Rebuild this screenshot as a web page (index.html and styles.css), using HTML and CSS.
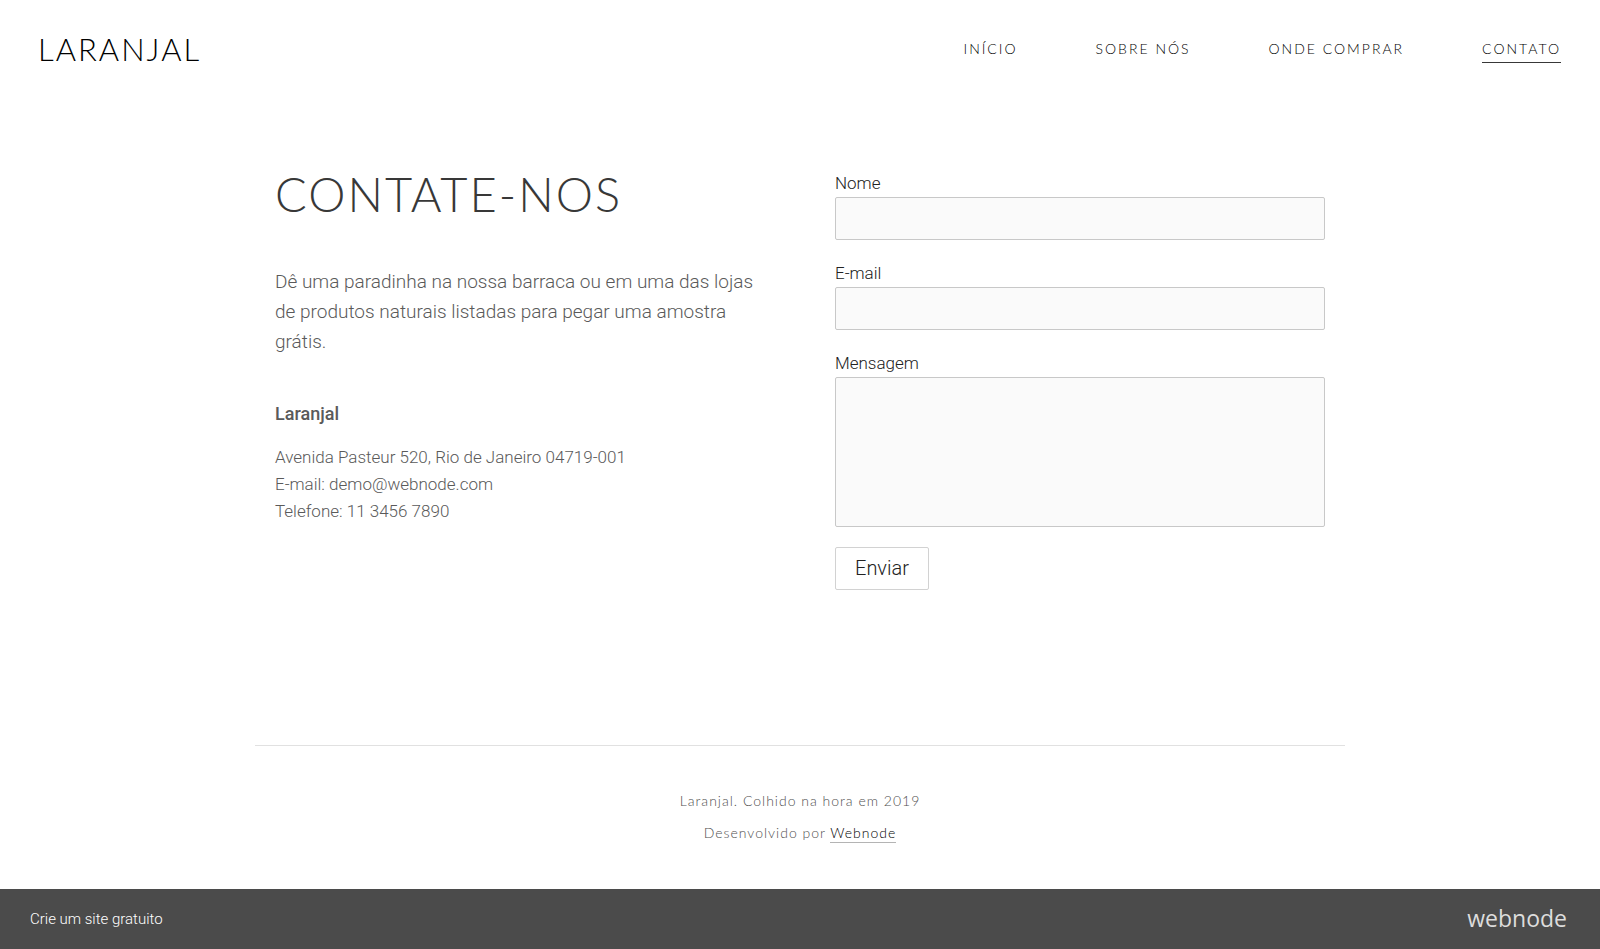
FILE: index.html
```html
<!DOCTYPE html>
<html lang="pt">
<head>
<meta charset="utf-8">
<title>Contato - Laranjal</title>
<meta name="viewport" content="width=device-width, initial-scale=1">
<link rel="stylesheet" href="styles.css">
</head>
<body>
<header class="header">
  <a class="brand" href="#">LARANJAL</a>
  <nav class="nav">
    <a href="#">INÍCIO</a>
    <a href="#">SOBRE NÓS</a>
    <a href="#">ONDE COMPRAR</a>
    <a class="active" href="#" aria-current="page">CONTATO</a>
  </nav>
</header>
<main class="contact">
  <section class="info">
    <h1>CONTATE-NOS</h1>
    <p class="lead">Dê uma paradinha na nossa barraca ou em uma das lojas de produtos naturais listadas para pegar uma amostra grátis.</p>
    <h2>Laranjal</h2>
    <address>Avenida Pasteur 520, Rio de Janeiro 04719-001<br>E-mail: demo@webnode.com<br>Telefone: 11 3456 7890</address>
  </section>
  <form class="form">
    <label for="name">Nome</label>
    <input id="name" type="text">
    <label for="email">E-mail</label>
    <input id="email" type="email">
    <label for="message">Mensagem</label>
    <textarea id="message"></textarea>
    <button type="submit">Enviar</button>
  </form>
</main>
<footer class="footer">
  <p>Laranjal. Colhido na hora em 2019</p>
  <p>Desenvolvido por <a href="#">Webnode</a></p>
</footer>
<aside class="promo">
  <a class="promo-text" href="#">Crie um site gratuito</a>
  <a class="promo-logo" href="#">webnode</a>
</aside>
</body>
</html>
```
FILE: styles.css
```css
* {
  box-sizing: border-box;
}

body {
  display: flex;
  flex-direction: column;
  min-height: 100vh;
  margin: 0;
  background: #fff;
  color: #5a5a5a;
  font-family: Roboto, sans-serif;
  font-weight: 300;
}

h1,
h2,
p,
address {
  margin: 0;
}

a {
  color: inherit;
  text-decoration: none;
}

.header {
  display: flex;
  align-items: center;
  justify-content: space-between;
  height: 98px;
  padding: 0 39px 0 38px;
  font-family: Lato, sans-serif;
}

.brand {
  color: #000;
  font-size: 31px;
  font-weight: 300;
  letter-spacing: 2px;
}

.nav {
  display: flex;
  gap: 78px;
  padding-top: 2px;
  color: #000;
  font-size: 14px;
  font-weight: 300;
  line-height: 24px;
  letter-spacing: 2px;
}

.nav a {
  padding-bottom: 1px;
  border-bottom: 1px solid transparent;
}

.nav .active {
  border-color: #383838;
}

.contact {
  display: grid;
  grid-template-columns: 1fr 1fr;
  gap: 70px;
  width: 100%;
  max-width: 1090px;
  margin: 0 auto;
  padding: 69px 20px 0;
}

.info h1 {
  color: #383838;
  font-family: Lato, sans-serif;
  font-size: 47px;
  font-weight: 300;
  line-height: 54px;
  letter-spacing: 2px;
}

.lead {
  margin-top: 46px;
  font-size: 19px;
  line-height: 30px;
}

.info h2 {
  margin-top: 42px;
  font-size: 18px;
  font-weight: 500;
  line-height: 30px;
}

.info address {
  margin-top: 15px;
  font-size: 17px;
  font-style: normal;
  line-height: 27px;
}

.form {
  display: flex;
  flex-direction: column;
  align-items: flex-start;
  padding-top: 4px;
  color: #222;
}

.form label {
  padding-bottom: 2px;
  font-size: 17px;
  line-height: 24px;
}

.form input,
.form textarea {
  width: 100%;
  height: 43px;
  margin-bottom: 21px;
  padding: 8px 12px;
  border: 1px solid #c8c8c8;
  border-radius: 2px;
  background: #fafafa;
  font: inherit;
  font-size: 17px;
}

.form textarea {
  height: 150px;
  margin-bottom: 20px;
  resize: none;
}

.form button {
  height: 43px;
  padding: 0 19px 2px;
  border: 1px solid #d2d2d2;
  border-radius: 2px;
  background: #fff;
  color: #222;
  font: inherit;
  font-size: 20px;
}

.footer {
  width: 100%;
  max-width: 1090px;
  margin: auto auto 0;
  padding: 39px 20px 40px;
  border-top: 1px solid #e1e1e1;
  color: #505050;
  font-family: Lato, sans-serif;
  font-size: 14px;
  font-weight: 300;
  line-height: 32px;
  letter-spacing: 1px;
  text-align: center;
}

.footer a {
  padding-bottom: 1px;
  border-bottom: 1px solid #b4b4b4;
  color: #000;
}

.promo {
  display: flex;
  align-items: center;
  justify-content: space-between;
  height: 60px;
  padding: 0 33px 0 30px;
  background: #4b4b4b;
  color: #fff;
}

.promo-text {
  font-size: 15px;
}

.promo-logo {
  padding-bottom: 2px;
  color: #ddd;
  font-family: "Open Sans", sans-serif;
  font-size: 23px;
  font-weight: 400;
  line-height: 30px;
}
```
